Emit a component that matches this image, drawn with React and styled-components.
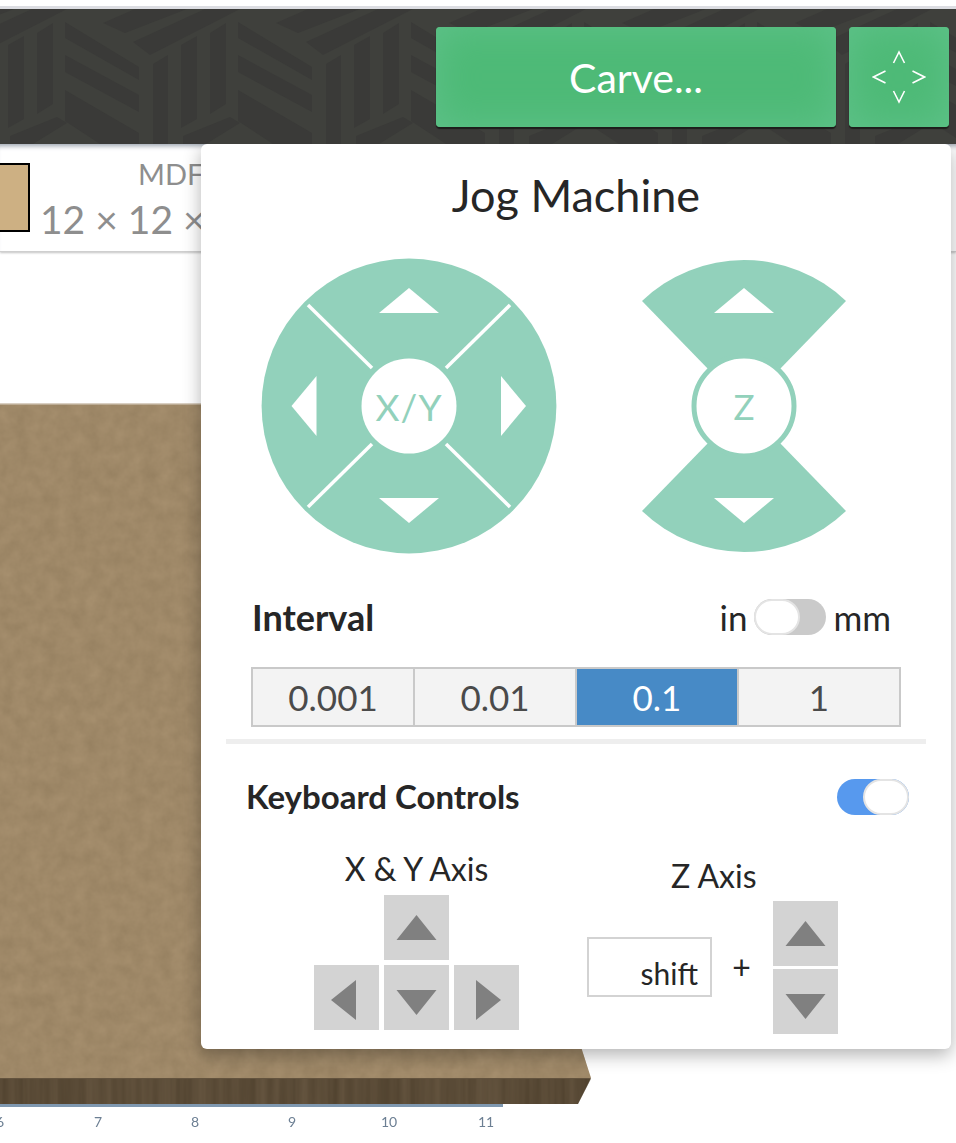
import React from 'react';
import styled, { createGlobalStyle } from 'styled-components';

const GlobalStyle = createGlobalStyle`
  html, body {
    margin: 0;
    padding: 0;
    background: #fff;
    font-family: Lato, "Open Sans", sans-serif;
  }
`;

const MINT = '#92d1bb';

const Page = styled.div`
  position: relative;
  width: 956px;
  height: 1143px;
  overflow: hidden;
  background: #fff;
  display: flex;
  flex-direction: column;
`;

const TopGap = styled.div`
  height: 6px;
  flex: none;
  background: #fff;
  border-bottom: 3px solid #dcdde2;
`;

const Toolbar = styled.div`
  position: relative;
  z-index: 3;
  flex: none;
  height: 135px;
  background: #3f403c;
  display: flex;
  justify-content: flex-end;
  gap: 13px;
  padding: 18px 7px 0 0;
  box-sizing: border-box;
`;

const Pattern = styled.svg`
  position: absolute;
  inset: 0;
`;

const GreenButton = styled.div`
  position: relative;
  width: ${({ $w }) => $w}px;
  height: 100px;
  box-sizing: border-box;
  border-radius: 4px;
  background: #4eba77;
  box-shadow: inset 0 0 38px #5fc28a, 0 2px 1px #1c1d1b;
  color: #fff;
  font-size: 41px;
  display: flex;
  align-items: center;
  justify-content: center;
`;

const SubBar = styled.div`
  position: relative;
  z-index: 1;
  flex: none;
  height: 108px;
  box-sizing: border-box;
  background: #fff;
  border-bottom: 1px solid #cfcfcf;
  box-shadow: inset 0 6px 5px -4px #9aa3ad, 0 1px 2px #c4c4c4;
  display: flex;
  padding-top: 18px;
  gap: 10px;
`;

const Swatch = styled.div`
  width: 33px;
  height: 69px;
  margin: 1px 0 0 -3px;
  box-sizing: border-box;
  background: #cdb083;
  border: 2px solid #000;
`;

const MaterialInfo = styled.div`
  width: 300px;
  margin-top: -5px;
  color: #8e8e8e;
  white-space: nowrap;
  display: flex;
  flex-direction: column;
  align-items: flex-start;
`;

const MaterialName = styled.div`
  font-size: 29px;
  line-height: 34px;
  margin: 0 0 8px 98px;
`;

const MaterialSize = styled.div`
  font-size: 39px;
  line-height: 40px;
`;

const Stage = styled.div`
  position: relative;
  flex: 1;
`;

const BoardArt = styled.svg`
  position: absolute;
  left: 0;
  top: 0;
`;

const Ruler = styled.div`
  position: absolute;
  left: 0;
  top: 861px;
  width: 510px;
  height: 20px;
`;

const Tick = styled.span`
  position: absolute;
  top: 0;
  transform: translateX(-50%);
  font-size: 14px;
  color: #6c7f93;
  filter: blur(0.6px);
`;

const Panel = styled.div`
  position: absolute;
  z-index: 2;
  left: 201px;
  top: 144px;
  width: 750px;
  height: 905px;
  box-sizing: border-box;
  background: #fff;
  border-radius: 6px;
  box-shadow: 0 6px 18px rgba(0, 0, 0, 0.3);
  color: #262626;
  display: flex;
  flex-direction: column;
`;

const PanelTitle = styled.div`
  font-size: 45px;
  line-height: 52px;
  text-align: center;
  padding-top: 25px;
`;

const Dials = styled.div`
  display: flex;
  margin-top: 37px;
  padding-left: 60px;
  gap: 85px;
`;

const IntervalRow = styled.div`
  display: flex;
  align-items: center;
  justify-content: space-between;
  margin-top: 43px;
  padding: 0 60px 0 51px;
  height: 40px;
`;

const BoldLabel = styled.div`
  font-size: ${({ $size }) => $size}px;
  font-weight: 700;
  white-space: nowrap;
`;

const UnitGroup = styled.div`
  display: flex;
  align-items: center;
  gap: 7px;
  font-size: 35px;
`;

const Toggle = styled.div`
  position: relative;
  width: 72px;
  height: 36px;
  margin-top: ${({ $on }) => ($on ? 2 : 0)}px;
  border-radius: 18px;
  background: ${({ $on }) => ($on ? '#5799ee' : '#cacaca')};
`;

const Knob = styled.div`
  position: absolute;
  top: 0;
  ${({ $on }) => ($on ? 'right: 0;' : 'left: 0;')}
  width: 46px;
  height: 36px;
  box-sizing: border-box;
  border-radius: 18px;
  background: #fff;
  border: 2px solid #e4e4e4;
`;

const Segments = styled.div`
  display: flex;
  margin: 30px 50px 0 50px;
  height: 60px;
  box-sizing: border-box;
  border: 2px solid #c9c9c9;
`;

const Segment = styled.div`
  flex: 1;
  display: flex;
  align-items: center;
  justify-content: center;
  font-size: 35px;
  color: ${({ $active }) => ($active ? '#fff' : '#4a4a4a')};
  background: ${({ $active }) => ($active ? '#478ac6' : '#f3f3f3')};
  & + & {
    border-left: 2px solid #c9c9c9;
  }
`;

const Divider = styled.div`
  height: 5px;
  margin: 12px 25px 0;
  background: #eeeeee;
`;

const KeyboardRow = styled.div`
  display: flex;
  align-items: center;
  justify-content: space-between;
  margin-top: 32px;
  height: 40px;
  padding: 0 42px 0 45px;
`;

const KeyAreas = styled.div`
  display: flex;
  align-items: flex-start;
  margin-top: 33px;
  padding-left: 113px;
`;

const AxisColumn = styled.div`
  display: flex;
  flex-direction: column;
  align-items: center;
`;

const AxisTitle = styled.div`
  font-size: 32px;
  line-height: 40px;
  white-space: nowrap;
`;

const ArrowGrid = styled.div`
  display: grid;
  grid-template-columns: repeat(3, 65px);
  grid-auto-rows: 65px;
  gap: 5px;
  margin-top: 6px;
`;

const Key = styled.div`
  grid-column: ${({ $col }) => $col || 'auto'};
  width: 65px;
  height: 65px;
  background: #d3d3d3;
  display: flex;
  align-items: center;
  justify-content: center;
`;

const ZColumn = styled.div`
  display: flex;
  flex-direction: column;
  margin-left: 68px;
  padding-top: 7px;
`;

const ZKeysRow = styled.div`
  display: flex;
  align-items: center;
  margin-top: 5px;
`;

const ShiftKey = styled.div`
  width: 125px;
  height: 60px;
  margin-top: -1px;
  box-sizing: border-box;
  border: 2px solid #d3d3d3;
  font-size: 30px;
  display: flex;
  align-items: flex-end;
  justify-content: flex-end;
  padding: 0 12px 4px 0;
`;

const Plus = styled.div`
  font-size: 32px;
  width: 61px;
  text-align: center;
  margin: -2px 1px 0 -1px;
`;

const ZKeys = styled.div`
  display: flex;
  flex-direction: column;
  gap: 3px;
`;

const ZTitle = styled(AxisTitle)`
  align-self: flex-start;
  margin-left: 84px;
`;

const Triangle = ({ dir }) => {
  const points = {
    up: '22.5,10 42.5,35 2.5,35',
    down: '2.5,15 42.5,15 22.5,40',
    left: '32,5 32,45 7,25',
    right: '12,5 12,45 37,25',
  }[dir];
  return (
    <svg width="45" height="45" viewBox="0 0 45 45">
      <polygon points={points} fill="#808080" />
    </svg>
  );
};

const XYDial = () => (
  <svg width="296" height="296" viewBox="0 0 296 296">
    <circle cx="148" cy="148" r="147.4" fill={MINT} />
    <g stroke="#fff" strokeWidth="3.5">
      <line x1="47" y1="47" x2="111" y2="110" />
      <line x1="249" y1="47" x2="185" y2="110" />
      <line x1="47" y1="249" x2="111" y2="186" />
      <line x1="249" y1="249" x2="185" y2="186" />
    </g>
    <g fill="#fff">
      <polygon points="148,30 178,55 118,55" />
      <polygon points="118,240 178,240 148,265" />
      <polygon points="55.500,118 55.500,178 30.500,148" />
      <polygon points="240,118 240,178 265,148" />
      <circle cx="148" cy="148" r="47.500" />
    </g>
    <text x="148" y="162.500" textAnchor="middle" fontFamily="Lato, sans-serif" fontSize="37" letterSpacing="1" fill={MINT}>X/Y</text>
  </svg>
);

const ZDial = () => (
  <svg width="204" height="296" viewBox="0 0 204 296">
    <path d="M0 43 A147.4 147.4 0 0 1 204 43 L102 148 Z" fill={MINT} />
    <path d="M0 253 A147.4 147.4 0 0 0 204 253 L102 148 Z" fill={MINT} />
    <circle cx="102" cy="148" r="50" fill="#fff" stroke={MINT} strokeWidth="5" />
    <polygon points="102,30 132,55 72,55" fill="#fff" />
    <polygon points="72,240 132,240 102,265" fill="#fff" />
    <text x="102" y="162" textAnchor="middle" fontFamily="Lato, sans-serif" fontSize="35" fill={MINT}>Z</text>
  </svg>
);

const PatternArt = () => (
  <Pattern width="956" height="135" viewBox="0 0 956 135">
    <g fill="#3a3a38">
      {[-173, 0, 173, 346, 519, 692, 865].map((x) => (
        <g key={x} transform={`translate(${x} 0)`}>
          <polygon points="37,24 53,14 53,95 37,105" />
          <polygon points="65,13 139,58 139,71 65,29" />
          <polygon points="65,46 139,86 139,103 65,63" />
          <polygon points="65,81 139,124 139,135 100,135 65,112" />
          <polygon points="153,55 168,46 168,135 153,135" />
          <polygon points="181,36 197,27 197,110 181,119" />
          <polygon points="103,14 135,0 187,0 125,24" />
          <polygon points="133,33 205,0 240,0 150,46" />
          <polygon points="10,127 57,108 67,114 33,135 10,135" />
        </g>
      ))}
    </g>
  </Pattern>
);

const BoardGraphic = () => (
  <BoardArt width="956" height="891" viewBox="0 0 956 891">
    <defs>
      <filter id="mottle" x="0" y="0" width="100%" height="100%" colorInterpolationFilters="sRGB">
        <feTurbulence type="fractalNoise" baseFrequency="0.07" numOctaves="4" seed="4" />
        <feColorMatrix values="0 0 0 0 0.52  0 0 0 0 0.44  0 0 0 0 0.32  0 0 0 0.55 -0.05" />
      </filter>
      <filter id="streaks" x="0" y="0" width="100%" height="100%" colorInterpolationFilters="sRGB">
        <feTurbulence type="fractalNoise" baseFrequency="0.12 0.004" numOctaves="3" seed="7" />
        <feColorMatrix values="0 0 0 0 0.25  0 0 0 0 0.2  0 0 0 0 0.13  0 0 0 0.7 -0.1" />
      </filter>
      <clipPath id="topFace">
        <polygon points="0,152 580,152 581.700,797 591,826 0,826" />
      </clipPath>
      <clipPath id="sideFace">
        <polygon points="0,827 591,827 578,852 0,852" />
      </clipPath>
    </defs>
    <polygon points="0,152 580,152 581.700,797 591,826 0,826" fill="#a68f6e" />
    <rect x="0" y="152" width="600" height="680" filter="url(#mottle)" clipPath="url(#topFace)" />
    <rect x="0" y="151" width="580" height="1.500" fill="#d9cfc2" />
    <polygon points="0,826 591,826 578,852 0,852" fill="#63533e" />
    <rect x="0" y="826" width="600" height="28" filter="url(#streaks)" clipPath="url(#sideFace)" />
    <rect x="0" y="852" width="503" height="3" fill="#7f98b0" />
  </BoardArt>
);

const App = () => (
  <Page>
    <GlobalStyle />
    <TopGap />
    <Toolbar>
      <PatternArt />
      <GreenButton $w={400}>Carve...</GreenButton>
      <GreenButton $w={100}>
        <svg width="54" height="54" viewBox="0 0 54 54" fill="none" stroke="#fff" strokeWidth="1.6">
          <path d="M21.500 13 L27 2 L32.500 13" />
          <path d="M21.500 41 L27 52 L32.500 41" />
          <path d="M13.500 21 L1.500 27 L13.500 33" />
          <path d="M40.500 21 L52.500 27 L40.500 33" />
        </svg>
      </GreenButton>
    </Toolbar>
    <SubBar>
      <Swatch />
      <MaterialInfo>
        <MaterialName>MDF</MaterialName>
        <MaterialSize>12 × 12 × 0.5 in</MaterialSize>
      </MaterialInfo>
    </SubBar>
    <Stage>
      <BoardGraphic />
      <Ruler>
        {[['6', 0], ['7', 98], ['8', 195], ['9', 292], ['10', 389], ['11', 486]].map(([label, x]) => (
          <Tick key={label} style={{ left: x }}>{label}</Tick>
        ))}
      </Ruler>
    </Stage>
    <Panel>
      <PanelTitle>Jog Machine</PanelTitle>
      <Dials>
        <XYDial />
        <ZDial />
      </Dials>
      <IntervalRow>
        <BoldLabel $size={36}>Interval</BoldLabel>
        <UnitGroup>
          in
          <Toggle>
            <Knob />
          </Toggle>
          mm
        </UnitGroup>
      </IntervalRow>
      <Segments>
        <Segment>0.001</Segment>
        <Segment>0.01</Segment>
        <Segment $active>0.1</Segment>
        <Segment>1</Segment>
      </Segments>
      <Divider />
      <KeyboardRow>
        <BoldLabel $size={33}>Keyboard Controls</BoldLabel>
        <Toggle $on>
          <Knob $on />
        </Toggle>
      </KeyboardRow>
      <KeyAreas>
        <AxisColumn>
          <AxisTitle>X &amp; Y Axis</AxisTitle>
          <ArrowGrid>
            <Key $col="2"><Triangle dir="up" /></Key>
            <Key $col="1"><Triangle dir="left" /></Key>
            <Key><Triangle dir="down" /></Key>
            <Key><Triangle dir="right" /></Key>
          </ArrowGrid>
        </AxisColumn>
        <ZColumn>
          <ZTitle>Z Axis</ZTitle>
          <ZKeysRow>
            <ShiftKey>shift</ShiftKey>
            <Plus>+</Plus>
            <ZKeys>
              <Key><Triangle dir="up" /></Key>
              <Key><Triangle dir="down" /></Key>
            </ZKeys>
          </ZKeysRow>
        </ZColumn>
      </KeyAreas>
    </Panel>
  </Page>
);

export default App;
